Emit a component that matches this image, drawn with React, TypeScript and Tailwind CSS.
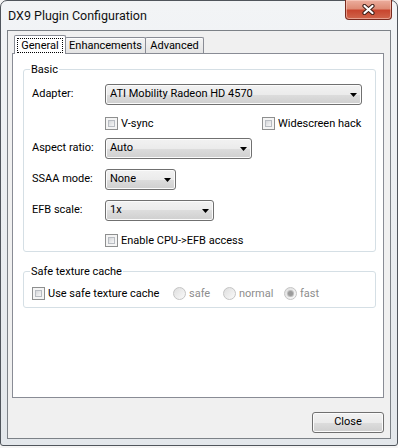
import React from 'react';

// Win7-ish "DX9 Plugin Configuration" dialog

const btnBg =
  'bg-[linear-gradient(#f2f2f2_0%,#ebebeb_50%,#dddddd_50%,#cfcfcf_100%)] shadow-[inset_0_0_0_1px_#fbfbfb]';

const Combo: React.FC<{ width: string; value: string }> = ({ width, value }) => (
  <div
    className={`${width} h-[21px] flex items-center justify-between pl-[4px] pr-[4px] border border-[#707070] rounded-[3px] ${btnBg}`}
  >
    <span className="truncate">{value}</span>
    <svg width="7" height="4" viewBox="0 0 7 4" className="shrink-0">
      <polygon points="0,0 7,0 3.5,4" fill="#000" />
    </svg>
  </div>
);

const Check: React.FC<{ label: string }> = ({ label }) => (
  <div className="flex items-center gap-[3px] h-[13px]">
    <span className="w-[13px] h-[13px] flex p-[2px] border border-[#8e8f8f] bg-[#f4f4f4]">
      <span className="flex-1 border border-[#b8bcc2] bg-[linear-gradient(135deg,#d4d6d9,#f7f7f7)]" />
    </span>
    <span className="leading-[13px]">{label}</span>
  </div>
);

const Radio: React.FC<{ label: string; checked?: boolean; width: string }> = ({ label, checked, width }) => (
  <div className={`${width} flex items-center gap-[3px] h-[13px]`}>
    <span className="w-[13px] h-[13px] rounded-full flex items-center justify-center border border-[#c4c4c4] bg-[linear-gradient(135deg,#dedede,#fafafa)]">
      {checked && <span className="w-[5px] h-[5px] rounded-full bg-[#9b9b9b] ring-1 ring-[#bdbdbd]" />}
    </span>
    <span className="leading-[13px] text-[#8d8d8d]">{label}</span>
  </div>
);

const Row: React.FC<{ label: string; className: string; children: React.ReactNode }> = ({ label, className, children }) => (
  <div className={`flex items-start ${className}`}>
    <span className="w-[73px] pt-[3px] leading-[13px]">{label}</span>
    {children}
  </div>
);

export default function App() {
  return (
    <div className="w-[398px] h-[448px] bg-[#f4f4f4] font-['Roboto',sans-serif] text-[11px] text-black">
      <div className="w-[398px] h-[446px] flex flex-col border border-[#50555c] rounded-t-[7px] rounded-b-[3px] bg-[linear-gradient(180deg,#f2f4f6,#e3e7eb)]">
        {/* title bar */}
        <div className="h-[29px] flex items-start justify-between">
          <span className="pl-[7px] text-[12.5px] leading-[29px] text-[#111]">DX9 Plugin Configuration</span>
          <div className="-mt-px mr-[5px] w-[47px] h-[20px] flex items-center justify-center border border-[#7a2a1e] border-t-0 rounded-b-[4px] bg-[linear-gradient(#ecae9e_0%,#de8c76_45%,#c8462f_55%,#d0664c_100%)] shadow-[inset_0_0_0_1px_rgba(255,220,210,0.5)]">
            <svg width="13" height="11" viewBox="0 0 13 11">
              <path d="M2.5 2 L10.5 9 M10.5 2 L2.5 9" stroke="#3b1d17" strokeWidth="4.2" strokeLinecap="round" />
              <path d="M2.5 2 L10.5 9 M10.5 2 L2.5 9" stroke="#ffffff" strokeWidth="2.2" strokeLinecap="round" />
            </svg>
          </div>
        </div>

        {/* client area */}
        <div className="ml-[6px] w-[384px] h-[409px] border border-[#7c8187] bg-[#f0f0f0] flex flex-col">
          {/* tabs */}
          <div className="relative z-10 h-[23px] pl-[6px] flex items-end">
            <div className="relative z-10 w-[52px] h-[19px] pt-[1px] px-[1px] border-t border-l border-r border-[#898c95] rounded-t-[2px] bg-white flex">
              <span className="flex-1 mx-px mt-px mb-[1px] border border-dotted border-black flex items-center justify-center leading-[13px]">
                General
              </span>
            </div>
            <div className="-ml-px mb-px w-[81px] h-[16px] border border-b-0 border-[#898c95] rounded-t-[2px] bg-[linear-gradient(#f4f4f4,#e4e4e4)] shadow-[inset_0_1px_0_#fdfdfd] flex items-center justify-center leading-[13px]">
              Enhancements
            </div>
            <div className="-ml-px mb-px w-[59px] h-[16px] border border-b-0 border-[#898c95] rounded-t-[2px] bg-[linear-gradient(#f4f4f4,#e4e4e4)] shadow-[inset_0_1px_0_#fdfdfd] flex items-center justify-center leading-[13px]">
              Advanced
            </div>
          </div>

          {/* panel */}
          <div className="-mt-px ml-[4px] w-[372px] h-[345px] border border-[#898c95] bg-white flex flex-col">
            <fieldset className="mt-[9px] ml-[10px] w-[353px] border border-[#d5dfe5] rounded-[3px] pl-[8px] pb-[4px]">
              <legend className="ml-[-2px] px-[1px] leading-[13px]">Basic</legend>
              <Row label="Adapter:" className="mt-[8px]">
                <Combo width="w-[257px]" value="ATI Mobility Radeon HD 4570" />
              </Row>
              <div className="mt-[12px] pl-[73px] flex">
                <div className="w-[157px]">
                  <Check label="V-sync" />
                </div>
                <Check label="Widescreen hack" />
              </div>
              <Row label="Aspect ratio:" className="mt-[8px]">
                <Combo width="w-[147px]" value="Auto" />
              </Row>
              <Row label="SSAA mode:" className="mt-[10px]">
                <Combo width="w-[71px]" value="None" />
              </Row>
              <Row label="EFB scale:" className="mt-[10px]">
                <Combo width="w-[109px]" value="1x" />
              </Row>
              <div className="mt-[13px] pl-[73px]">
                <Check label="Enable CPU->EFB access" />
              </div>
            </fieldset>

            <fieldset className="mt-[13px] ml-[10px] w-[353px] border border-[#d5dfe5] rounded-[3px] pl-[8px] pb-[7px]">
              <legend className="ml-[-2px] px-[1px] leading-[13px]">Safe texture cache</legend>
              <div className="mt-[9px] flex">
                <div className="w-[141px]">
                  <Check label="Use safe texture cache" />
                </div>
                <Radio width="w-[50px]" label="safe" />
                <Radio width="w-[61px]" label="normal" />
                <Radio width="w-[50px]" label="fast" checked />
              </div>
            </fieldset>
          </div>

          <div className="mt-[14px] mr-[6px] flex justify-end">
            <div className={`w-[72px] h-[21px] border border-[#707070] rounded-[3px] flex items-center justify-center ${btnBg}`}>
              Close
            </div>
          </div>
        </div>
      </div>
    </div>
  );
}
